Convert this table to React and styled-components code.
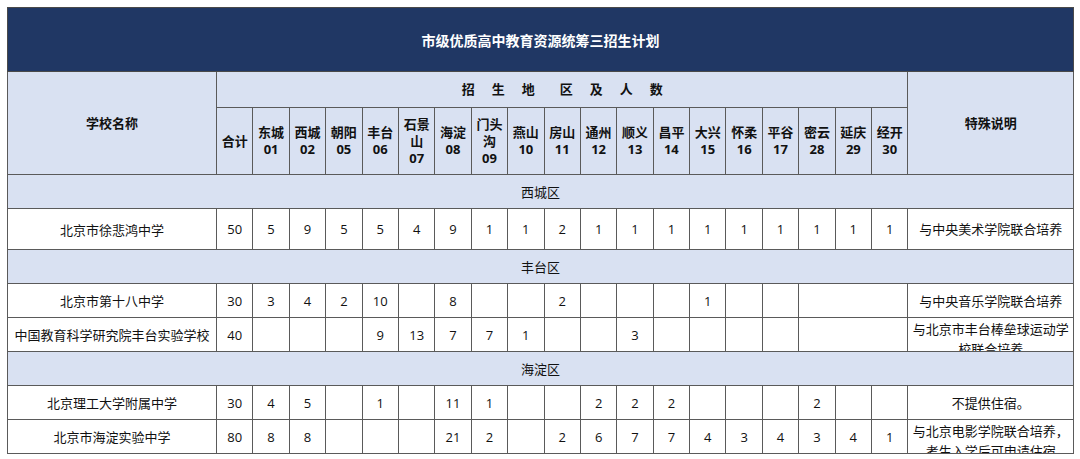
import React from "react";
import styled, { createGlobalStyle } from "styled-components";

const GlobalStyle = createGlobalStyle`
  body {
    margin: 0;
    background: #ffffff;
    font-family: "Open Sans", "Noto Sans CJK SC", sans-serif;
    color: #111111;
  }
`;

const Page = styled.div`
  padding: 7px 0 0 7px;
`;

const Sheet = styled.table`
  width: 1066px;
  border-collapse: collapse;
  table-layout: fixed;
  font-size: 13px;
`;

const TitleCell = styled.th`
  height: 63px;
  padding: 0;
  background: #203764;
  color: #ffffff;
  font-size: 14px;
  font-weight: 700;
  border: 1px solid #4a4a4a;
`;

const HeadCell = styled.th`
  height: ${(p) => p.$h || 35}px;
  padding: 0;
  background: #d9e1f2;
  font-weight: 700;
  line-height: 17px;
  text-align: center;
  border: 1px solid #5a5a5a;
`;

const Spaced = styled.div`
  display: flex;
  justify-content: center;
  gap: 17px;

  span:nth-child(3) {
    margin-right: 8px;
  }
`;

const SectionCell = styled.td`
  height: 33px;
  padding: 0;
  background: #d9e1f2;
  text-align: center;
  border: 1px solid #5a5a5a;
`;

const Cell = styled.td`
  height: ${(p) => p.$h || 33}px;
  padding: 0;
  background: #ffffff;
  text-align: center;
  border: 1px solid #5a5a5a;
`;

const NoteBox = styled.div`
  height: ${(p) => p.$h || 33}px;
  overflow: hidden;
  display: flex;
  align-items: ${(p) => (p.$wrap ? "flex-start" : "center")};
  justify-content: center;
  padding: ${(p) => (p.$wrap ? "1px 2px 0" : "0 2px")};
  box-sizing: border-box;
  line-height: 20px;
  text-align: center;
`;

const districts = [
  ["合计"],
  ["东城", "01"],
  ["西城", "02"],
  ["朝阳", "05"],
  ["丰台", "06"],
  ["石景", "山", "07"],
  ["海淀", "08"],
  ["门头", "沟", "09"],
  ["燕山", "10"],
  ["房山", "11"],
  ["通州", "12"],
  ["顺义", "13"],
  ["昌平", "14"],
  ["大兴", "15"],
  ["怀柔", "16"],
  ["平谷", "17"],
  ["密云", "28"],
  ["延庆", "29"],
  ["经开", "30"],
];

// merged: number of trailing district columns shown as a single blank cell
const sections = [
  {
    name: "西城区",
    rows: [
      {
        school: "北京市徐悲鸿中学",
        h: 40,
        nums: [50, 5, 9, 5, 5, 4, 9, 1, 1, 2, 1, 1, 1, 1, 1, 1, 1, 1, 1],
        note: "与中央美术学院联合培养",
      },
    ],
  },
  {
    name: "丰台区",
    rows: [
      {
        school: "北京市第十八中学",
        nums: [30, 3, 4, 2, 10, "", 8, "", "", 2, "", "", "", 1, "", ""],
        merged: 3,
        note: "与中央音乐学院联合培养",
      },
      {
        school: "中国教育科学研究院丰台实验学校",
        nums: [40, "", "", "", 9, 13, 7, 7, 1, "", "", 3, "", "", "", ""],
        merged: 3,
        note: "与北京市丰台棒垒球运动学校联合培养",
        wrap: true,
      },
    ],
  },
  {
    name: "海淀区",
    rows: [
      {
        school: "北京理工大学附属中学",
        nums: [30, 4, 5, "", 1, "", 11, 1, "", "", 2, 2, 2, "", "", "", 2, "", ""],
        note: "不提供住宿。",
      },
      {
        school: "北京市海淀实验中学",
        nums: [80, 8, 8, "", "", "", 21, 2, "", 2, 6, 7, 7, 4, 3, 4, 3, 4, 1],
        note: "与北京电影学院联合培养，考生入学后可申请住宿",
        wrap: true,
      },
    ],
  },
];

const App = () => {
  return (
    <>
      <GlobalStyle />
      <Page>
        <Sheet>
          <colgroup>
            <col style={{ width: 209 }} />
            {districts.map((d) => (
              <col key={d.join("")} style={{ width: 36.4 }} />
            ))}
            <col style={{ width: 165.4 }} />
          </colgroup>
          <thead>
            <tr>
              <TitleCell colSpan={21}>市级优质高中教育资源统筹三招生计划</TitleCell>
            </tr>
            <tr>
              <HeadCell rowSpan={2}>学校名称</HeadCell>
              <HeadCell colSpan={19} $h={35}>
                <Spaced>
                  {"招生地区及人数".split("").map((c) => (
                    <span key={c}>{c}</span>
                  ))}
                </Spaced>
              </HeadCell>
              <HeadCell rowSpan={2}>特殊说明</HeadCell>
            </tr>
            <tr>
              {districts.map((d) => (
                <HeadCell key={d.join("")} $h={66}>
                  {d.map((line, i) => (
                    <React.Fragment key={i}>
                      {i > 0 && <br />}
                      {line}
                    </React.Fragment>
                  ))}
                </HeadCell>
              ))}
            </tr>
          </thead>
          <tbody>
            {sections.map((s) => (
              <React.Fragment key={s.name}>
                <tr>
                  <SectionCell colSpan={21}>{s.name}</SectionCell>
                </tr>
                {s.rows.map((r) => (
                  <tr key={r.school}>
                    <Cell $h={r.h}>{r.school}</Cell>
                    {r.nums.map((n, i) => (
                      <Cell key={i} $h={r.h}>
                        {n}
                      </Cell>
                    ))}
                    {r.merged && <Cell colSpan={r.merged} $h={r.h} />}
                    <Cell $h={r.h}>
                      <NoteBox $h={r.h} $wrap={r.wrap}>
                        {r.note}
                      </NoteBox>
                    </Cell>
                  </tr>
                ))}
              </React.Fragment>
            ))}
          </tbody>
        </Sheet>
      </Page>
    </>
  );
};

export default App;
